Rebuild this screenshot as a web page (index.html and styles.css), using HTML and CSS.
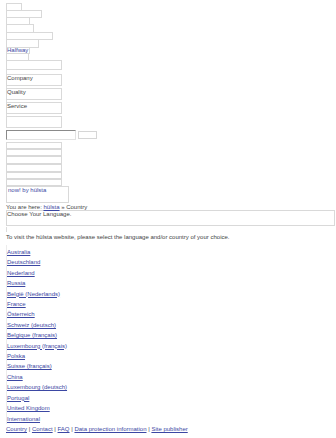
FILE: index.html
```html
<!DOCTYPE html>
<html lang="en">
<head>
    <meta charset="UTF-8">
    <meta name="viewport" content="width=device-width, initial-scale=1.0">
    <title>hülsta - Country</title>
    <link rel="stylesheet" href="styles.css">
</head>
<body>
    <div class="page">
        <div class="nav">
            <div class="slot" style="width: 16px; height: 8px;"></div>
            <div class="slot" style="width: 36px; height: 8px;"></div>
            <div class="slot" style="width: 24px; height: 8px;"></div>
            <div class="slot" style="width: 28px; height: 9px;"></div>
            <div class="slot" style="width: 47px; height: 8px;"></div>
            <div class="slot" style="width: 33px; height: 9px;"></div>
            <div class="slot" style="width: 24px; height: 7px;"><a href="#" class="plain">Halfway</a></div>
            <div class="slot" style="width: 23px; height: 8px;"></div>
            <div class="slot" style="width: 56px; height: 10px;"></div>
        </div>

        <div class="tick tall"></div>
        <div class="panel">Company</div>
        <div class="tick"></div>
        <div class="panel">Quality</div>
        <div class="tick"></div>
        <div class="panel">Service</div>
        <div class="tick"></div>
        <div class="panel"></div>

        <form class="search">
            <input type="text" class="search-field">
            <button type="button" class="search-btn"></button>
        </form>

        <div class="stack">
            <div class="row" style="height: 7px;"></div>
            <div class="row" style="height: 7px;"></div>
            <div class="row" style="height: 8px;"></div>
            <div class="row" style="height: 8px;"></div>
            <div class="row" style="height: 7px;"></div>
            <div class="row" style="height: 7px;"></div>
        </div>

        <div class="brand"><a href="#" class="plain">now! by hülsta</a></div>

        <p class="crumbs">You are here: <a href="#">hülsta</a> » Country</p>

        <div class="choose">Choose Your Language.</div>
        <div class="tick mid"></div>

        <p class="intro">To visit the hülsta website, please select the language and/or country of your choice.</p>

        <ul class="countries">
            <li><a href="#">Australia</a></li>
            <li><a href="#">Deutschland</a></li>
            <li><a href="#">Nederland</a></li>
            <li><a href="#">Russia</a></li>
            <li><a href="#">België (Nederlands)</a></li>
            <li><a href="#">France</a></li>
            <li><a href="#">Österreich</a></li>
            <li><a href="#">Schweiz (deutsch)</a></li>
            <li><a href="#">Belgique (français)</a></li>
            <li><a href="#">Luxembourg (français)</a></li>
            <li><a href="#">Polska</a></li>
            <li><a href="#">Suisse (français)</a></li>
            <li><a href="#">China</a></li>
            <li><a href="#">Luxembourg (deutsch)</a></li>
            <li><a href="#">Portugal</a></li>
            <li><a href="#">United Kingdom</a></li>
            <li><a href="#">International</a></li>
        </ul>

        <footer>
            <a href="#">Country</a> | <a href="#">Contact</a> | <a href="#">FAQ</a> | <a href="#">Data protection information</a> | <a href="#">Site publisher</a>
        </footer>
    </div>
</body>
</html>
```

FILE: styles.css
```css
* {
    margin: 0;
    padding: 0;
    box-sizing: border-box;
}

body {
    font-family: "Liberation Sans", Arial, sans-serif;
    font-size: 6px;
    color: #444;
    background: #fff;
}

a {
    color: #3b47a3;
}

a.plain {
    text-decoration: none;
}

.page {
    padding: 3px 0 0 6px;
}

.slot {
    border: 1px solid #d9d9d9;
    line-height: 5px;
    overflow: hidden;
    white-space: nowrap;
}

.slot + .slot {
    margin-top: -1px;
}

.tick {
    height: 2px;
    border-left: 1px solid #dcdcdc;
}

.tick.tall {
    height: 4px;
}

.tick.mid {
    height: 5px;
    margin-top: 1px;
}

.panel {
    width: 56px;
    height: 12px;
    border: 1px solid #d9d9d9;
    line-height: 6px;
}

.search {
    display: flex;
    align-items: center;
    gap: 2px;
    margin: 2px 0;
}

.search-field {
    width: 70px;
    height: 10px;
    border: 1px solid #e2e2e2;
    border-top-color: #8a8a8a;
    border-left-color: #8a8a8a;
    background: #fff;
}

.search-btn {
    width: 19px;
    height: 8px;
    border: 1px solid #d6d6d6;
    background: #fff;
}

.row {
    width: 56px;
    border: 1px solid #d9d9d9;
}

.brand {
    width: 63px;
    height: 17px;
    border: 1px solid #d9d9d9;
    line-height: 6px;
    padding-left: 1px;
}

.crumbs {
    margin-top: 2px;
    line-height: 5px;
}

.choose {
    width: 329px;
    height: 16px;
    border: 1px solid #d9d9d9;
    padding-top: 1px;
    line-height: 5px;
}

.intro {
    margin-top: 2px;
    line-height: 7px;
}

.countries {
    list-style: none;
    margin-top: 4px;
    padding-top: 2px;
    border-left: 1px solid #ececec;
}

.countries li {
    line-height: 10.4px;
}

footer {
    line-height: 10.4px;
}
```
